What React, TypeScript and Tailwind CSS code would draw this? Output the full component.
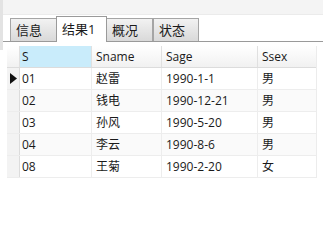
import React from 'react';

const rows = [
  { s: '01', name: '赵雷', age: '1990-1-1', sex: '男', current: true },
  { s: '02', name: '钱电', age: '1990-12-21', sex: '男' },
  { s: '03', name: '孙风', age: '1990-5-20', sex: '男' },
  { s: '04', name: '李云', age: '1990-8-6', sex: '男' },
  { s: '08', name: '王菊', age: '1990-2-20', sex: '女' },
];

const tabs = ['信息', '结果1', '概况', '状态'];

const font = { fontFamily: '"Open Sans", "Noto Sans CJK SC", sans-serif' };

export default function App() {
  return (
    <div className="relative w-[323px] h-[200px] bg-white overflow-hidden text-[12px] text-[#1a1a1a]" style={font}>
      {/* top band */}
      <div className="h-[15px] bg-[#f4f4f4] border-b border-[#ebebeb]" />
      <div className="absolute left-0 top-0 w-[3px] h-[50px] bg-[#e3e3e3]" />

      {/* tab strip */}
      <div className="flex items-end h-[27px] pl-[10px] border-b border-[#9a9a9a]">
        {tabs.map((t, i) =>
          i === 1 ? (
            <div
              key={t}
              className="h-[26px] w-[51px] -mb-px bg-white border border-b-0 border-[#9a9a9a] flex items-center pl-[5px] text-[13px] leading-none"
            >
              {t}
            </div>
          ) : (
            <div
              key={t}
              className={`h-[23px] ${i === 0 ? 'w-[46px]' : 'w-[46px]'} border border-b-0 border-[#a5a5a5] bg-gradient-to-b from-[#f2f2f2] to-[#d9d9d9] flex items-center pl-[5px] text-[13px] leading-none ${i === 2 ? 'border-l-0' : ''} ${i === 0 ? 'border-r-0' : ''}`}
            >
              {t}
            </div>
          )
        )}
      </div>

      {/* grid */}
      <div className="ml-[7px] mt-[4px] w-[310px] border-r border-[#ececec]">
        <div className="flex h-[22px] bg-gradient-to-b from-white to-[#f1f1f1] border-b border-[#dcdcdc]">
          <div className="w-[13px] border-r border-[#e0e0e0]" />
          <div className="w-[72px] bg-[#c9ecfb] border-r border-[#e0e0e0] flex items-center pl-[2px]">S</div>
          <div className="w-[70px] border-r border-[#e0e0e0] flex items-center pl-[4px]">Sname</div>
          <div className="w-[96px] border-r border-[#e0e0e0] flex items-center pl-[4px]">Sage</div>
          <div className="flex-1 flex items-center pl-[4px]">Ssex</div>
        </div>
        {rows.map((r, i) => (
          <div
            key={r.s}
            className={`flex h-[22px] border-b border-[#ededed] ${i % 2 === 1 ? 'bg-[#fafafa]' : 'bg-white'}`}
          >
            <div className="w-[13px] bg-[#f3f3f3] border-r border-[#dcdcdc] flex items-center justify-center">
              {r.current && (
                <svg width="7" height="11" viewBox="0 0 7 11">
                  <path d="M0 0 L7 5.5 L0 11 Z" fill="#111" />
                </svg>
              )}
            </div>
            <div className="w-[72px] border-r border-[#ededed] flex items-center pl-[2px]">{r.s}</div>
            <div className="w-[70px] border-r border-[#ededed] flex items-center pl-[4px]">{r.name}</div>
            <div className="w-[96px] border-r border-[#ededed] flex items-center pl-[4px]">{r.age}</div>
            <div className="flex-1 flex items-center pl-[4px]">{r.sex}</div>
          </div>
        ))}
      </div>
    </div>
  );
}
